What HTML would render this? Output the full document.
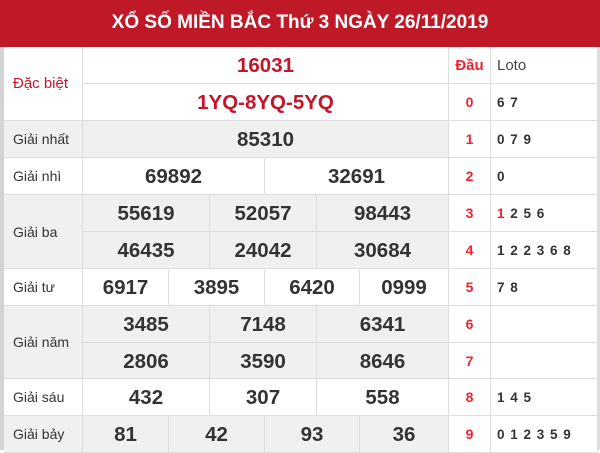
<!DOCTYPE html>
<html><head><meta charset="utf-8"><style>
*{margin:0;padding:0;box-sizing:border-box}
body{width:600px;height:450px;overflow:hidden;background:#fff;font-family:"Liberation Sans",Arial,sans-serif;position:relative}
.h{position:absolute;left:0;top:0;width:600px;height:47px;background:#bf1827;color:#fff;font-weight:bold;font-size:19px;text-align:center;line-height:46px}
.c{position:absolute;border-right:1px solid #ddd;border-bottom:1px solid #ddd;display:flex;align-items:center;justify-content:center;color:#333;font-weight:bold;font-size:20.5px;padding-top:2px}
.l{justify-content:flex-start;padding-left:9px;font-weight:normal;font-size:14px;color:#333;padding-top:0}
.g{background:#f0f0f0}
.r{color:#c4162a}
.d{color:#f0212f;font-size:14px;padding-top:0}
.t{justify-content:flex-start;padding-left:6px;font-size:13.5px;color:#333;letter-spacing:1px;padding-top:0}
.bl{position:absolute;left:0;top:47px;width:4px;height:403px;background:#d4d4d4}
.br{position:absolute;left:598px;top:47px;width:2px;height:403px;background:#ddd}
</style></head><body>
<div class="h">XỔ SỐ MIỀN BẮC Thứ 3 NGÀY 26/11/2019</div>
<div class="bl"></div><div class="br"></div>

<div class="c l r" style="left:4px;top:47px;width:79px;height:74px;color:#c4162a;font-size:15px;padding-left:9px">Đặc biệt</div>
<div class="c r" style="left:83px;top:47px;width:366px;height:37px">16031</div>
<div class="c r" style="left:83px;top:84px;width:366px;height:37px">1YQ-8YQ-5YQ</div>

<div class="c l g" style="left:4px;top:121px;width:79px;height:37px">Giải nhất</div>
<div class="c g" style="left:83px;top:121px;width:366px;height:37px">85310</div>

<div class="c l" style="left:4px;top:158px;width:79px;height:37px">Giải nhì</div>
<div class="c" style="left:83px;top:158px;width:182px;height:37px">69892</div>
<div class="c" style="left:265px;top:158px;width:184px;height:37px">32691</div>

<div class="c l g" style="left:4px;top:195px;width:79px;height:74px">Giải ba</div>
<div class="c g" style="left:83px;top:195px;width:127px;height:37px">55619</div>
<div class="c g" style="left:210px;top:195px;width:107px;height:37px">52057</div>
<div class="c g" style="left:317px;top:195px;width:132px;height:37px">98443</div>
<div class="c g" style="left:83px;top:232px;width:127px;height:37px">46435</div>
<div class="c g" style="left:210px;top:232px;width:107px;height:37px">24042</div>
<div class="c g" style="left:317px;top:232px;width:132px;height:37px">30684</div>

<div class="c l" style="left:4px;top:269px;width:79px;height:37px">Giải tư</div>
<div class="c" style="left:83px;top:269px;width:86px;height:37px">6917</div>
<div class="c" style="left:169px;top:269px;width:96px;height:37px">3895</div>
<div class="c" style="left:265px;top:269px;width:95px;height:37px">6420</div>
<div class="c" style="left:360px;top:269px;width:89px;height:37px">0999</div>

<div class="c l g" style="left:4px;top:306px;width:79px;height:73px">Giải năm</div>
<div class="c g" style="left:83px;top:306px;width:127px;height:37px">3485</div>
<div class="c g" style="left:210px;top:306px;width:107px;height:37px">7148</div>
<div class="c g" style="left:317px;top:306px;width:132px;height:37px">6341</div>
<div class="c g" style="left:83px;top:343px;width:127px;height:36px">2806</div>
<div class="c g" style="left:210px;top:343px;width:107px;height:36px">3590</div>
<div class="c g" style="left:317px;top:343px;width:132px;height:36px">8646</div>

<div class="c l" style="left:4px;top:379px;width:79px;height:37px">Giải sáu</div>
<div class="c" style="left:83px;top:379px;width:127px;height:37px">432</div>
<div class="c" style="left:210px;top:379px;width:107px;height:37px">307</div>
<div class="c" style="left:317px;top:379px;width:132px;height:37px">558</div>

<div class="c l g" style="left:4px;top:416px;width:79px;height:37px">Giải bảy</div>
<div class="c g" style="left:83px;top:416px;width:86px;height:37px">81</div>
<div class="c g" style="left:169px;top:416px;width:96px;height:37px">42</div>
<div class="c g" style="left:265px;top:416px;width:95px;height:37px">93</div>
<div class="c g" style="left:360px;top:416px;width:89px;height:37px">36</div>

<div class="c d" style="left:449px;top:47px;width:42px;height:37px;font-size:15px">Đầu</div>
<div class="c t" style="left:491px;top:47px;width:107px;height:37px;font-size:15px;letter-spacing:0;color:#444;font-weight:normal">Loto</div>
<div class="c d" style="left:449px;top:84px;width:42px;height:37px">0</div><div class="c t" style="left:491px;top:84px;width:107px;height:37px">6 7</div>
<div class="c d" style="left:449px;top:121px;width:42px;height:37px">1</div><div class="c t" style="left:491px;top:121px;width:107px;height:37px">0 7 9</div>
<div class="c d" style="left:449px;top:158px;width:42px;height:37px">2</div><div class="c t" style="left:491px;top:158px;width:107px;height:37px">0</div>
<div class="c d" style="left:449px;top:195px;width:42px;height:37px">3</div><div class="c t" style="left:491px;top:195px;width:107px;height:37px"><span style="color:#f0212f">1</span>&nbsp;2 5 6</div>
<div class="c d" style="left:449px;top:232px;width:42px;height:37px">4</div><div class="c t" style="left:491px;top:232px;width:107px;height:37px">1 2 2 3 6 8</div>
<div class="c d" style="left:449px;top:269px;width:42px;height:37px">5</div><div class="c t" style="left:491px;top:269px;width:107px;height:37px">7 8</div>
<div class="c d" style="left:449px;top:306px;width:42px;height:37px">6</div><div class="c t" style="left:491px;top:306px;width:107px;height:37px"></div>
<div class="c d" style="left:449px;top:343px;width:42px;height:36px">7</div><div class="c t" style="left:491px;top:343px;width:107px;height:36px"></div>
<div class="c d" style="left:449px;top:379px;width:42px;height:37px">8</div><div class="c t" style="left:491px;top:379px;width:107px;height:37px">1 4 5</div>
<div class="c d" style="left:449px;top:416px;width:42px;height:37px">9</div><div class="c t" style="left:491px;top:416px;width:107px;height:37px">0 1 2 3 5 9</div>
</body></html>
